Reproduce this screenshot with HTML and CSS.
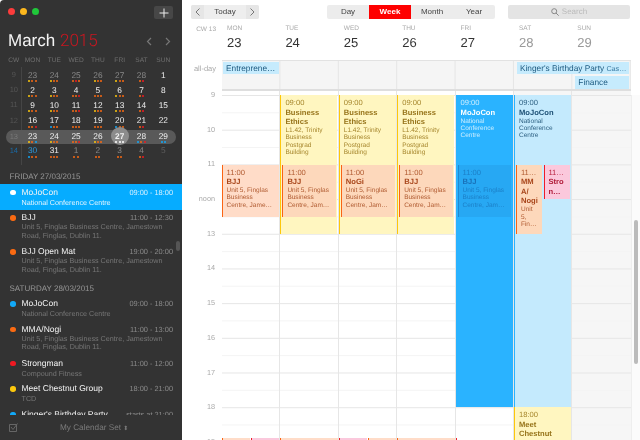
FILE: index.html
```html
<!DOCTYPE html>
<html lang="en">
<head>
<meta charset="utf-8">
<title>Calendar</title>
<link rel="stylesheet" href="styles.css">
</head>
<body>
<div class="app">
  <aside class="side">
    <div class="titlebar">
      <div class="lights"><i class="l-red"></i><i class="l-yel"></i><i class="l-grn"></i></div>
      <button class="add"><svg width="10" height="10" viewBox="0 0 10 10"><path d="M5 .5v9M.5 5h9" stroke="#eee" stroke-width="1"/></svg></button>
    </div>
    <div class="month">
      <div class="month-name">March <span class="year">2015</span></div>
      <div class="month-nav">
        <svg width="6" height="9" viewBox="0 0 6 9"><path d="M5 1 1.5 4.5 5 8" fill="none" stroke="#777" stroke-width="1.2"/></svg>
        <svg width="6" height="9" viewBox="0 0 6 9"><path d="M1 1l3.5 3.5L1 8" fill="none" stroke="#777" stroke-width="1.2"/></svg>
      </div>
    </div>
    <div class="cal">
      <div class="wk head"><span>CW</span><span>MON</span><span>TUE</span><span>WED</span><span>THU</span><span>FRI</span><span>SAT</span><span>SUN</span></div>
      <div class="wk">
        <span class="cw">9</span>
        <div class="d old">23<p><i class="y"></i><i class="o"></i><i class="o"></i></p></div>
        <div class="d old">24<p><i class="y"></i><i class="o"></i><i class="o"></i></p></div>
        <div class="d old">25<p><i class="o"></i><i class="r"></i><i class="o"></i></p></div>
        <div class="d old">26<p><i class="y"></i><i class="o"></i><i class="o"></i></p></div>
        <div class="d old">27<p><i class="y"></i><i class="o"></i><i class="o"></i></p></div>
        <div class="d old">28<p><i class="o"></i><i class="r"></i></p></div>
        <div class="d">1<p></p></div>
      </div>
      <div class="wk">
        <span class="cw">10</span>
        <div class="d">2<p><i class="y"></i><i class="o"></i><i class="o"></i></p></div>
        <div class="d">3<p><i class="y"></i><i class="o"></i><i class="o"></i></p></div>
        <div class="d">4<p><i class="o"></i><i class="o"></i><i class="r"></i></p></div>
        <div class="d">5<p><i class="o"></i><i class="o"></i><i class="o"></i></p></div>
        <div class="d">6<p><i class="y"></i><i class="o"></i><i class="o"></i></p></div>
        <div class="d">7<p><i class="o"></i><i class="r"></i></p></div>
        <div class="d">8<p></p></div>
      </div>
      <div class="wk">
        <span class="cw">11</span>
        <div class="d">9<p><i class="y"></i><i class="o"></i><i class="o"></i></p></div>
        <div class="d">10<p><i class="y"></i><i class="o"></i><i class="o"></i></p></div>
        <div class="d">11<p><i class="o"></i><i class="o"></i><i class="r"></i></p></div>
        <div class="d">12<p><i class="y"></i><i class="o"></i><i class="o"></i></p></div>
        <div class="d">13<p><i class="y"></i><i class="o"></i><i class="o"></i></p></div>
        <div class="d">14<p><i class="o"></i><i class="r"></i></p></div>
        <div class="d">15<p></p></div>
      </div>
      <div class="wk">
        <span class="cw">12</span>
        <div class="d">16<p><i class="o"></i><i class="o"></i><i class="r"></i></p></div>
        <div class="d">17<p><i class="b"></i><i class="o"></i><i class="o"></i></p></div>
        <div class="d">18<p><i class="o"></i><i class="o"></i><i class="o"></i></p></div>
        <div class="d">19<p><i class="o"></i><i class="o"></i><i class="o"></i></p></div>
        <div class="d">20<p><i class="b"></i><i class="o"></i><i class="o"></i></p></div>
        <div class="d">21<p><i class="o"></i><i class="r"></i></p></div>
        <div class="d">22<p></p></div>
      </div>
      <div class="wk current">
        <span class="cw">13</span>
        <div class="d">23<p><i class="y"></i><i class="o"></i><i class="b"></i></p></div>
        <div class="d">24<p><i class="y"></i><i class="o"></i><i class="o"></i></p></div>
        <div class="d">25<p><i class="o"></i><i class="o"></i><i class="r"></i></p></div>
        <div class="d">26<p><i class="y"></i><i class="o"></i><i class="o"></i></p></div>
        <div class="d today">27<p><i class="w"></i><i class="w"></i><i class="w"></i></p></div>
        <div class="d">28<p><i class="b"></i><i class="o"></i><i class="r"></i></p></div>
        <div class="d">29<p><i class="b"></i><i class="b"></i></p></div>
      </div>
      <div class="wk">
        <span class="cw cw-now">14</span>
        <div class="d now">30<p><i class="b"></i><i class="o"></i><i class="o"></i></p></div>
        <div class="d">31<p><i class="o"></i><i class="o"></i><i class="o"></i></p></div>
        <div class="d old">1<p><i class="o"></i><i class="o"></i></p></div>
        <div class="d old">2<p><i class="o"></i><i class="o"></i></p></div>
        <div class="d old">3<p><i class="o"></i><i class="o"></i></p></div>
        <div class="d old">4<p><i class="o"></i><i class="r"></i></p></div>
        <div class="d dim">5<p></p></div>
      </div>
    </div>
    <div class="list">
      <h2 class="sec">FRIDAY 27/03/2015</h2>
      <div class="row short sel"><i class="dot" ></i><div class="row-top"><b>MoJoCon</b><time>09:00 - 18:00</time></div><p>National Conference Centre</p></div>
      <div class="row"><i class="dot o"></i><div class="row-top"><b>BJJ</b><time>11:00 - 12:30</time></div><p>Unit 5, Finglas Business Centre, Jamestown<br>Road, Finglas, Dublin 11.</p></div>
      <div class="row"><i class="dot o"></i><div class="row-top"><b>BJJ Open Mat</b><time>19:00 - 20:00</time></div><p>Unit 5, Finglas Business Centre, Jamestown<br>Road, Finglas, Dublin 11.</p></div>
      <h2 class="sec sec-next">SATURDAY 28/03/2015</h2>
      <div class="row short"><i class="dot b"></i><div class="row-top"><b>MoJoCon</b><time>09:00 - 18:00</time></div><p>National Conference Centre</p></div>
      <div class="row"><i class="dot o"></i><div class="row-top"><b>MMA/Nogi</b><time>11:00 - 13:00</time></div><p>Unit 5, Finglas Business Centre, Jamestown<br>Road, Finglas, Dublin 11.</p></div>
      <div class="row short"><i class="dot r"></i><div class="row-top"><b>Strongman</b><time>11:00 - 12:00</time></div><p>Compound Fitness</p></div>
      <div class="row short"><i class="dot y"></i><div class="row-top"><b>Meet Chestnut Group</b><time>18:00 - 21:00</time></div><p>TCD</p></div>
      <div class="row short"><i class="dot b"></i><div class="row-top"><b>Kinger's Birthday Party</b><time>starts at 21:00</time></div></div>
      <div class="list-thumb"></div>
    </div>
    <div class="foot">
      <svg width="9" height="9" viewBox="0 0 9 9"><path d="M.5 1.5h7v7h-7z" fill="none" stroke="#666"/><path d="M2 4l2 2.5L8.5 .5" fill="none" stroke="#666"/></svg>
      <span class="foot-name">My Calendar Set <span class="updown">⬍</span></span>
    </div>
  </aside>

  <main class="main">
    <header class="bar">
      <div class="seg nav">
        <button class="chev"><svg width="5" height="8" viewBox="0 0 5 8"><path d="M4.5.5 1 4l3.5 3.5" fill="none" stroke="#777"/></svg></button>
        <button class="today-btn">Today</button>
        <button class="chev"><svg width="5" height="8" viewBox="0 0 5 8"><path d="M.5.5 4 4 .5 7.5" fill="none" stroke="#777"/></svg></button>
      </div>
      <div class="seg views">
        <button>Day</button><button class="on">Week</button><button>Month</button><button>Year</button>
      </div>
      <div class="search">
        <svg width="8" height="8" viewBox="0 0 8 8"><circle cx="3.2" cy="3.2" r="2.5" fill="none" stroke="#888"/><path d="M5 5l2.7 2.7" stroke="#888"/></svg>
        <span>Search</span>
      </div>
    </header>

    <div class="heads">
      <div class="cw-label">CW 13</div>
      <div class="dh"><small>MON</small><strong>23</strong></div>
      <div class="dh"><small>TUE</small><strong>24</strong></div>
      <div class="dh"><small>WED</small><strong>25</strong></div>
      <div class="dh"><small>THU</small><strong>26</strong></div>
      <div class="dh"><small>FRI</small><strong>27</strong></div>
      <div class="dh we"><small>SAT</small><strong>28</strong></div>
      <div class="dh we"><small>SUN</small><strong>29</strong></div>
    </div>

    <div class="allday">
      <div class="allday-label">all-day</div>
      <div class="allday-grid">
        <div class="ad ad-ent">Entreprene…</div>
        <div class="ad ad-king">Kinger's Birthday Party <small>Cas…</small></div>
        <div class="ad ad-fin">Finance</div>
      </div>
    </div>

    <div class="time">
      <div class="hours">
        <div>9</div><div>10</div><div>11</div><div>noon</div><div>13</div><div>14</div><div>15</div><div>16</div><div>17</div><div>18</div><div>19</div>
      </div>
      <div class="day">
        <article class="ev orange ev-bjj-mon"><span>11:00</span><b>BJJ</b><p>Unit 5, Finglas<br>Business<br>Centre, Jame…</p></article>
        <div class="ev orange tail tail-half"></div>
        <div class="ev pink tail tail-half2"></div>
      </div>
      <div class="day">
        <article class="ev yellow ev-ethics"><span>09:00</span><b>Business<br>Ethics</b><p>L1.42, Trinity<br>Business<br>Postgrad<br>Building</p></article>
        <article class="ev peach ev-bjj"><span>11:00</span><b>BJJ</b><p>Unit 5, Finglas<br>Business<br>Centre, Jam…</p></article>
        <div class="ev orange tail"></div>
      </div>
      <div class="day">
        <article class="ev yellow ev-ethics"><span>09:00</span><b>Business<br>Ethics</b><p>L1.42, Trinity<br>Business<br>Postgrad<br>Building</p></article>
        <article class="ev peach ev-bjj"><span>11:00</span><b>NoGi</b><p>Unit 5, Finglas<br>Business<br>Centre, Jam…</p></article>
        <div class="ev pink tail tail-half"></div>
        <div class="ev orange tail tail-half2"></div>
      </div>
      <div class="day">
        <article class="ev yellow ev-ethics"><span>09:00</span><b>Business<br>Ethics</b><p>L1.42, Trinity<br>Business<br>Postgrad<br>Building</p></article>
        <article class="ev peach ev-bjj"><span>11:00</span><b>BJJ</b><p>Unit 5, Finglas<br>Business<br>Centre, Jam…</p></article>
        <div class="ev orange tail"></div>
      </div>
      <div class="day">
        <article class="ev solid ev-mojo"><span>09:00</span><b>MoJoCon</b><p>National<br>Conference<br>Centre</p></article>
        <article class="ev ghost ev-bjj"><span>11:00</span><b>BJJ</b><p>Unit 5, Finglas<br>Business<br>Centre, Jam…</p></article>
        <div class="ev pink tail tail-tick"></div>
      </div>
      <div class="day weekend">
        <article class="ev sky ev-mojo"><span>09:00</span><b>MoJoCon</b><p>National<br>Conference<br>Centre</p></article>
        <article class="ev peach ev-mma"><span>11…</span><b>MM<br>A/<br>Nogi</b><p>Unit<br>5,<br>Fin…</p></article>
        <article class="ev pink ev-strong"><span>11…</span><b>Stro<br>n…</b></article>
        <article class="ev yellow ev-meet"><span>18:00</span><b>Meet<br>Chestnut</b></article>
      </div>
      <div class="day weekend last"></div>
      <div class="scroll"><div class="thumb"></div></div>
    </div>
  </main>
</div>
</body>
</html>
```

FILE: styles.css
```css
* { box-sizing: border-box; }
html, body { margin: 0; height: 100%; background: #fff; overflow: hidden; }
body { font-family: "Liberation Sans", Arial, sans-serif; text-rendering: geometricPrecision; }
p, h2 { margin: 0; font-weight: normal; }
i { display: block; }
button { font: inherit; border: 0; padding: 0; background: none; color: inherit; }

.app { display: flex; width: 640px; height: 440px; will-change: opacity; }

/* sidebar */
.side { width: 182px; height: 440px; flex: none; background: #333; display: flex; flex-direction: column; border-radius: 4px 0 0 4px; color: #eee; }
.titlebar { height: 24px; flex: none; display: flex; justify-content: space-between; padding: 6px 9px 0 8px; }
.lights { display: flex; gap: 5px; padding-top: 2px; }
.lights i { width: 7px; height: 7px; border-radius: 50%; }
.l-red { background: #fc3c3c; }
.l-yel { background: #fdb81e; }
.l-grn { background: #20c83a; }
.add { width: 19px; height: 13px; background: #474747; border-radius: 2px; display: flex; align-items: center; justify-content: center; }
.month { height: 30px; flex: none; display: flex; justify-content: space-between; align-items: center; padding: 4px 11px 0 8px; }
.month-name { font-size: 17px; line-height: 20px; color: #f4f4f4; }
.year { font-family: Roboto, sans-serif; font-weight: 300; color: #cc1620; }
.month-nav { display: flex; gap: 13px; }
.cal { height: 114px; flex: none; padding: 0 6px; position: relative; }
.wk { display: grid; grid-template-columns: 15.6px repeat(7, 21.8px); height: 15.2px; text-align: center; font-size: 8.3px; }
.head { height: 14px; font-size: 6.6px; line-height: 14px; color: #6f6f6f; }
.cal::before { content: ""; position: absolute; left: 21px; top: 13px; bottom: 3px; width: 1px; background: #454545; }
.cw { color: #555; font-size: 7.5px; line-height: 14px; }
.cw-now { color: #1a6aa6; }
.d { color: #f0f0f0; line-height: 10.5px; padding-top: 1.5px; position: relative; }
.d p { display: flex; justify-content: center; gap: 1.2px; height: 3px; }
.d p i { width: 2px; height: 2px; border-radius: 50%; }
.old { color: #8a8a8a; }
.dim { color: #5e5e5e; }
.now { color: #2b9ae0; }
.current { background: #595959; border-radius: 7px; margin-top: 1px; height: 14px; position: relative; }
.current .cw { color: #787878; }
.current .d { padding-top: 1px; }
.today { z-index: 0; font-weight: bold; }
.today::before { content: ""; position: absolute; z-index: -1; left: 2px; top: -2.5px; width: 18px; height: 18px; border-radius: 50%; background: #8c8c8c; }
.y { background: #fcc80d; }
.o { background: #fa6a12; }
.r { background: #f01922; }
.b { background: #12a9f8; }
.w { background: #fff; }

.list { flex: 1; min-height: 0; overflow: hidden; position: relative; }
.sec { height: 16px; line-height: 18px; padding-left: 9.5px; font-size: 8px; color: #959595; }
.sec-next { margin-top: 2px; }
.row { position: relative; padding: 3.5px 9px 0 21.5px; height: 34px; font-size: 8.5px; }
.short { height: 25.5px; }
.row-top { display: flex; justify-content: space-between; line-height: 9px; }
.row-top b { font-weight: normal; color: #f4f4f4; }
.row-top time { font-size: 7.4px; color: #8a8a8a; }
.row p { font-size: 7.2px; line-height: 8.7px; color: #767676; margin-top: 1px; white-space: nowrap; }
.short p { margin-top: 2px; }
.dot { position: absolute; left: 10px; top: 5.5px; width: 5.5px; height: 5.5px; border-radius: 50%; }
.sel { background: #06acff; }
.sel .dot { background: #fff; }
.sel .row-top time { color: #d6f0ff; }
.sel p { color: #e3f5ff; }
.list-thumb { position: absolute; right: 2px; top: 73px; width: 4px; height: 10px; background: #555; border-radius: 2px; }
.foot { height: 25px; flex: none; display: flex; align-items: center; padding: 0 0 0 9px; font-size: 8.2px; color: #7b7b7b; background: #333; }
.foot-name { margin-left: 42px; }
.updown { font-size: 6px; }

/* main */
.main { flex: 1; min-width: 0; display: flex; flex-direction: column; }
.bar { height: 24px; flex: none; display: flex; padding: 5px 10px 0 9px; font-size: 8px; color: #444; }
.seg { display: flex; height: 13.5px; border-radius: 2px; overflow: hidden; background: #eee; }
.seg button { line-height: 13.5px; }
.nav { width: 68px; }
.chev { width: 13px; background: #e6e6e6; display: flex; align-items: center; justify-content: center; }
.today-btn { flex: 1; }
.views { margin-left: 68px; width: 168px; background: #ececec; }
.views button { width: 42px; text-align: center; }
.views .on { background: #fe0000; color: #fff; font-weight: bold; }
.search { margin-left: 13px; width: 122px; height: 13.5px; background: #e4e4e4; border-radius: 2px; display: flex; align-items: center; justify-content: center; gap: 3px; color: #bbb; }

.heads { height: 35.5px; flex: none; display: grid; grid-template-columns: 40px repeat(7, 58.4px); }
.cw-label { font-size: 6.5px; color: #a8a8a8; text-align: right; padding: 2px 6px 0 0; line-height: 7px; }
.dh { padding: 1px 0 0 5px; }
.dh small { display: block; font-size: 6.5px; line-height: 8px; color: #aaa; }
.dh strong { display: block; font-size: 13px; font-weight: normal; line-height: 15px; margin-top: 2px; color: #333; }
.we strong { color: #999; }

.allday { height: 31.5px; flex: none; display: flex; }
.allday-label { width: 40px; flex: none; font-size: 7.5px; color: #aaa; text-align: right; padding: 4px 6px 0 0; line-height: 9px; }
.allday-grid { width: 408.8px; display: grid; grid-template-columns: repeat(7, 58.4px); grid-template-rows: 14.5px 14px; align-content: start; padding-top: 1px; background-color: #f5f5f5; background-image: linear-gradient(to left, #e5e5e5 1px, transparent 1px); background-size: 58.4px 100%; border-top: 1px solid #e2e2e2; border-bottom: 2px solid #dedede; }
.ad { background: #c6ebfd; color: #1c5a80; font-size: 8.3px; line-height: 12.5px; height: 12.5px; padding-left: 3px; white-space: nowrap; overflow: hidden; }
.ad small { font-size: 7.2px; color: #3b7ba3; }
.ad-ent { grid-column: 1; grid-row: 1; margin: 0 1px; }
.ad-king { grid-column: 6 / 8; grid-row: 1; margin: 0 1.5px 0 3px; }
.ad-fin { grid-column: 7; grid-row: 2; margin: 0 1.5px 0 3px; }

.time { flex: 1; min-height: 0; display: grid; grid-template-columns: 40px repeat(7, 58.4px) 1fr; overflow: hidden; }
.hours { padding-top: 4px; font-size: 7.3px; color: #aaa; text-align: right; }
.hours div { height: 34.7px; line-height: 0; padding-right: 7px; }
.day { position: relative; height: 349px; border-right: 1px solid #e6e6e6; background-image: linear-gradient(#e6e6e6 1px, transparent 1px), linear-gradient(#f4f4f4 1px, transparent 1px); background-size: 100% 34.7px; background-position: 0 4px, 0 21.3px; }
.weekend { background-color: #f6f6f6; }
.last { border-right: 0; }
.scroll { background: #fbfbfb; border-left: 1px solid #eee; margin-top: 4px; padding: 125px 2px 0 2px; }
.thumb { height: 144px; width: 4px; background: #bbb; border-radius: 2px; }

/* events */
.ev { position: absolute; overflow: hidden; font-size: 7.6px; line-height: 9.5px; padding: 3px 0 0 4px; border-left: 1.5px solid; }
.ev span { display: block; }
.ev b { display: block; font-size: 7.6px; line-height: 9.6px; }
.ev p { font-size: 6.5px; line-height: 7.3px; margin-top: .5px; white-space: nowrap; }
.yellow { background: #fff6c0; border-color: #fdc70a; color: #a6862c; }
.yellow b { color: #97741a; }
.orange { background: #ffdcc8; border-color: #fa6414; color: #b05a30; }
.orange b { color: #a8451a; }
.peach { background: #fdd8bb; border-color: #fa6414; color: #b05a30; }
.peach b { color: #a8451a; }
.pink { background: #fbc8dc; border-color: #ee1c28; color: #b92440; }
.pink b { color: #b01a38; }
.solid { background: #2ab3ff; border-color: #2ab3ff; color: #cdeeff; }
.solid b { color: #fff; }
.sky { background: #c4eafd; border-color: #2ab3ff; color: #2f6284; }
.sky b { color: #1c4f74; }
.ghost { background: rgba(24, 110, 180, .16); border-color: rgba(24, 90, 160, .4); color: rgba(20, 100, 170, .6); }
.ghost b { color: rgba(20, 90, 160, .7); }

.ev-bjj-mon { left: -.5px; right: 0; top: 73.5px; height: 52px; }
.ev-ethics { left: 0; right: .5px; top: 4px; height: 138.8px; }
.ev-bjj { left: 2px; right: 1.5px; top: 73.5px; height: 52px; }
.ev-mojo { left: 0; right: 0; top: 4px; height: 312px; }
.ev-mma { left: 2.5px; right: 29px; top: 73.5px; height: 69px; padding-left: 3.5px; }
.ev-strong { left: 30px; right: 1px; top: 73.5px; height: 34.5px; padding-left: 3.5px; }
.ev-meet { left: 0; right: 0; top: 316px; height: 40px; }
.tail { top: 346.5px; height: 6px; padding: 0; left: 0; right: 0; }
.tail-half { right: 29px; }
.tail-half2 { left: 29px; }
.tail-tick { right: 57px; }
```
